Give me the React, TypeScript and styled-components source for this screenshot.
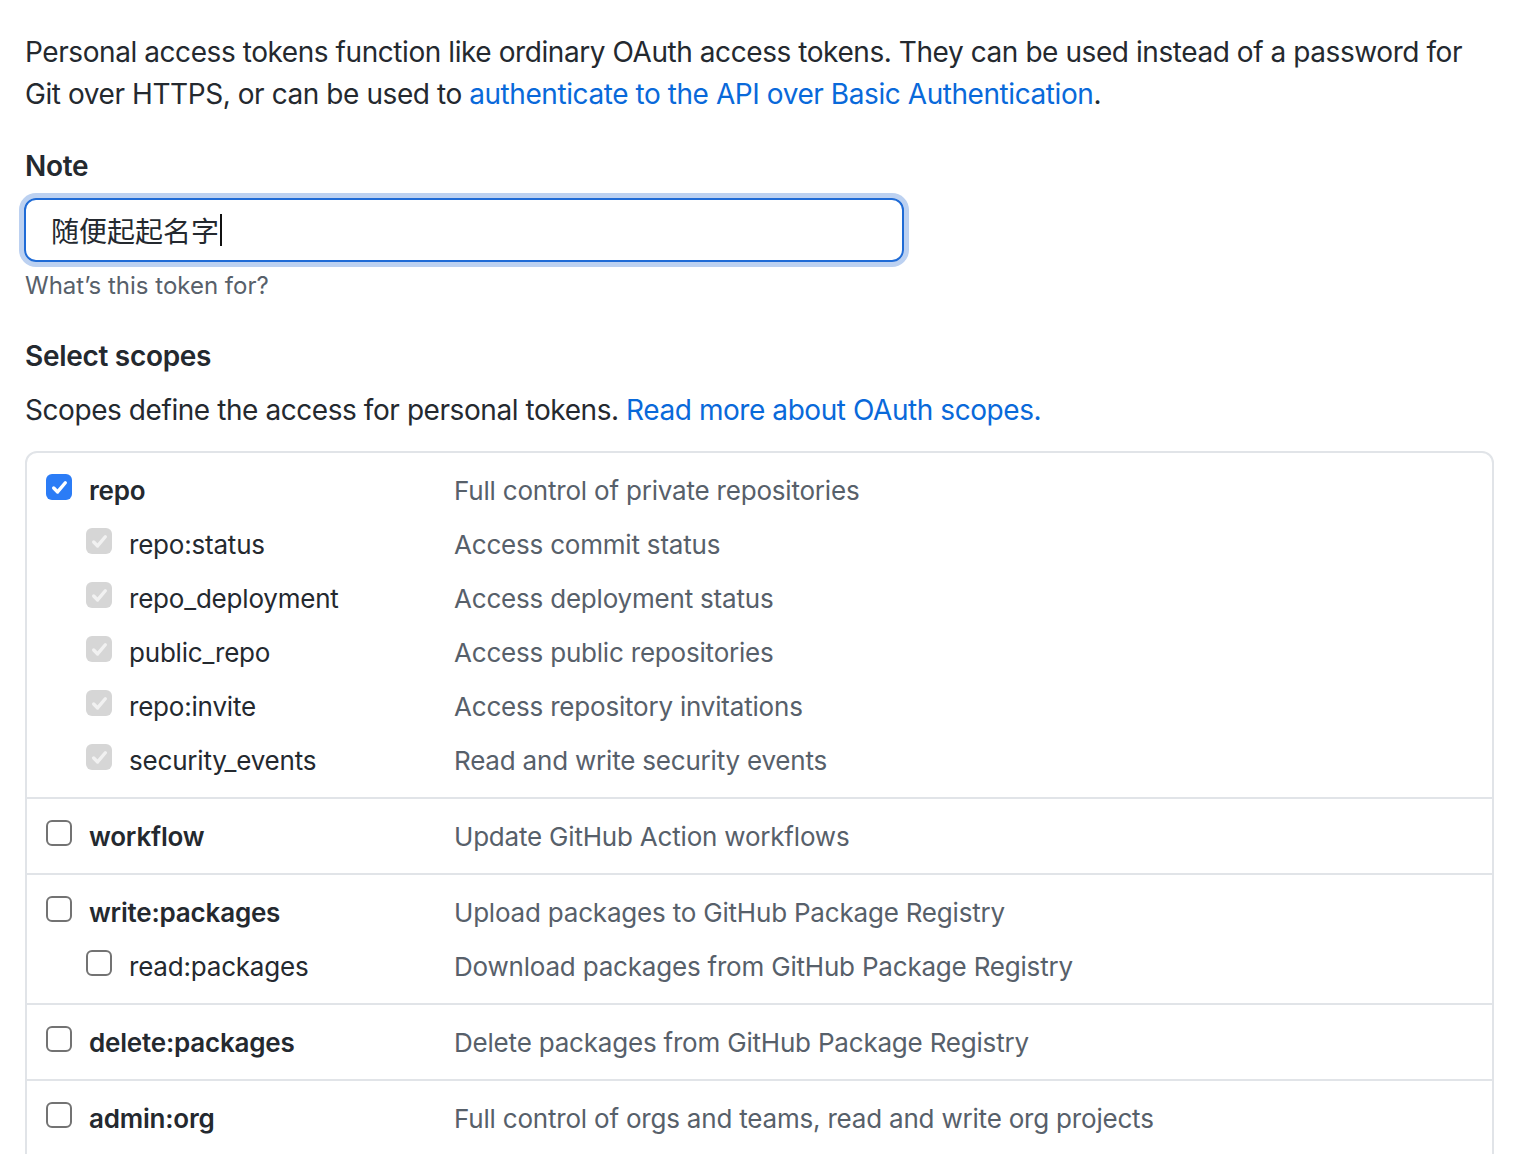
import React from "react";
import styled, { createGlobalStyle } from "styled-components";

const Global = createGlobalStyle`
  html, body { margin: 0; padding: 0; background: #ffffff; overflow: hidden; }
  body {
    font-family: Inter, "Noto Sans", "Noto Sans CJK SC", sans-serif;
    color: #24292f;
    -webkit-font-smoothing: antialiased;
  }
`;

const Page = styled.main`
  width: 1469px;
  padding: 31px 0 0 25px;
`;

const Intro = styled.p`
  margin: 0 0 30px;
  font-size: 28px;
  line-height: 42px;
  letter-spacing: -0.43px;
  color: #24292f;
`;

const Link = styled.a`
  color: #0969da;
  text-decoration: none;
`;

const Label = styled.h3`
  margin: 0 0 11px;
  font-size: 28px;
  line-height: 42px;
  font-weight: 600;
  letter-spacing: -0.3px;
`;

const Field = styled.div`
  width: 880px;
  height: 64px;
  box-sizing: border-box;
  margin-left: -1px;
  border: 2px solid #1f6bd6;
  border-radius: 12px;
  box-shadow: 0 0 0 5px #bcd1f1;
  display: flex;
  align-items: center;
  padding: 0 0 0 25px;
  font-family: "Noto Sans CJK SC", sans-serif;
  font-size: 28px;
  color: #24292f;
`;

const Caret = styled.span`
  display: inline-block;
  width: 2px;
  height: 32px;
  background: #111;
  margin-left: 1px;
`;

const Hint = styled.p`
  margin: 12px 0 0;
  font-size: 24px;
  line-height: 24px;
  letter-spacing: 0;
  color: #57606a;
`;

const SectionTitle = styled.h3`
  margin: 37px 0 12px;
  font-size: 28px;
  line-height: 42px;
  font-weight: 600;
  letter-spacing: -0.3px;
`;

const Lead = styled.p`
  margin: 0 0 20px;
  font-size: 28px;
  line-height: 42px;
  letter-spacing: -0.43px;
`;

const ScopeBox = styled.div`
  border: 2px solid #e1e4e8;
  border-radius: 12px;
`;

const Group = styled.div`
  padding: 10px 0;
  & + & {
    border-top: 2px solid #e1e4e8;
  }
`;

const Row = styled.div`
  display: grid;
  grid-template-columns: 427px 1fr;
  height: 54px;
  align-items: center;
  font-size: 26px;
  letter-spacing: -0.2px;
`;

const Name = styled.label<{ $child?: boolean }>`
  display: flex;
  align-items: center;
  gap: 17px;
  padding-left: ${(p) => (p.$child ? 59 : 19)}px;
  font-weight: ${(p) => (p.$child ? 400 : 600)};
  color: #24292f;
`;

const Desc = styled.span`
  color: #57606a;
`;

const Box = styled.span<{ $state: "on" | "off" | "locked" }>`
  flex: none;
  width: 26px;
  height: 26px;
  box-sizing: border-box;
  border-radius: 6px;
  margin-top: -6px;
  display: flex;
  align-items: center;
  justify-content: center;
  background: ${(p) =>
    p.$state === "on" ? "#2b7cf6" : p.$state === "locked" ? "#d6d6d6" : "#ffffff"};
  border: ${(p) => (p.$state === "off" ? "2px solid #737373" : "none")};
`;

type State = "on" | "off" | "locked";

const Check = ({ state }: { state: State }) => (
  <Box $state={state}>
    {state !== "off" && (
      <svg width="19" height="19" viewBox="0 0 18 18">
        <path
          d="M3.5 9.5 L7.2 13.2 L14.5 4.5"
          fill="none"
          stroke={state === "on" ? "#ffffff" : "#f1f1f1"}
          strokeWidth="3.2"
          strokeLinecap="round"
          strokeLinejoin="round"
        />
      </svg>
    )}
  </Box>
);

type Scope = { name: string; desc: string; state: State; children?: { name: string; desc: string; state: State }[] };

const scopes: Scope[] = [
  {
    name: "repo",
    desc: "Full control of private repositories",
    state: "on",
    children: [
      { name: "repo:status", desc: "Access commit status", state: "locked" },
      { name: "repo_deployment", desc: "Access deployment status", state: "locked" },
      { name: "public_repo", desc: "Access public repositories", state: "locked" },
      { name: "repo:invite", desc: "Access repository invitations", state: "locked" },
      { name: "security_events", desc: "Read and write security events", state: "locked" },
    ],
  },
  { name: "workflow", desc: "Update GitHub Action workflows", state: "off" },
  {
    name: "write:packages",
    desc: "Upload packages to GitHub Package Registry",
    state: "off",
    children: [{ name: "read:packages", desc: "Download packages from GitHub Package Registry", state: "off" }],
  },
  { name: "delete:packages", desc: "Delete packages from GitHub Package Registry", state: "off" },
  {
    name: "admin:org",
    desc: "Full control of orgs and teams, read and write org projects",
    state: "off",
    children: [
      { name: "write:org", desc: "Read and write org and team membership, read and write org projects", state: "off" },
      { name: "read:org", desc: "Read org and team membership, read org projects", state: "off" },
    ],
  },
];

export default function App() {
  return (
    <>
      <Global />
      <Page>
        <Intro>
          Personal access tokens function like ordinary OAuth access tokens. They can be used instead of a password for
          Git over HTTPS, or can be used to <Link href="#">authenticate to the API over Basic Authentication</Link>.
        </Intro>

        <Label>Note</Label>
        <Field role="textbox">
          随便起起名字
          <Caret />
        </Field>
        <Hint>What’s this token for?</Hint>

        <SectionTitle>Select scopes</SectionTitle>
        <Lead>
          Scopes define the access for personal tokens. <Link href="#">Read more about OAuth scopes.</Link>
        </Lead>

        <ScopeBox>
          {scopes.map((s) => (
            <Group key={s.name}>
              <Row>
                <Name>
                  <Check state={s.state} />
                  {s.name}
                </Name>
                <Desc>{s.desc}</Desc>
              </Row>
              {s.children?.map((c) => (
                <Row key={c.name}>
                  <Name $child>
                    <Check state={c.state} />
                    {c.name}
                  </Name>
                  <Desc>{c.desc}</Desc>
                </Row>
              ))}
            </Group>
          ))}
        </ScopeBox>
      </Page>
    </>
  );
}
